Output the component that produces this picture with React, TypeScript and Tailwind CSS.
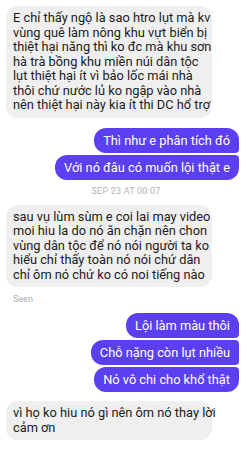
const font = { fontFamily: "Roboto, 'Noto Sans', sans-serif" };

type Pos = "first" | "middle" | "last" | "single";

function Received({ lines }: { lines: string[] }) {
  return (
    <div className="flex justify-start pl-[6px]">
      <div className="w-[206px] rounded-[12px] bg-[#efefef] px-[7px] py-[5px] text-[12.8px] leading-[14.5px] text-[#1c1c1c]">
        {lines.map((l, i) => (
          <div key={i} className="whitespace-nowrap">
            {l}
          </div>
        ))}
      </div>
    </div>
  );
}

function Sent({ text, pos }: { text: string; pos: Pos }) {
  const corners =
    pos === "first"
      ? "rounded-[12px] rounded-br-[4px]"
      : pos === "middle"
        ? "rounded-[12px] rounded-tr-[4px] rounded-br-[4px]"
        : pos === "last"
          ? "rounded-[12px] rounded-tr-[4px]"
          : "rounded-[12px]";
  return (
    <div className="flex justify-end pr-[11px]">
      <div
        className={`${corners} bg-[#5b40f2] px-[9px] py-[5px] text-[12.8px] leading-[15px] text-white whitespace-nowrap`}
      >
        {text}
      </div>
    </div>
  );
}

export default function App() {
  return (
    <div className="w-[250px] h-[449px] overflow-hidden bg-white" style={font}>
      <div className="pt-[6px]">
        <Received
          lines={[
            "E chỉ thấy ngộ là sao htro lụt mà kv",
            "vùng quê làm nông khu vựt biển bị",
            "thiệt hại năng thì ko đc mà khu sơn",
            "hà trà bồng khu miền núi dân tộc",
            "lụt thiệt hại ít vì bảo lốc mái nhà",
            "thôi chứ nước lủ ko ngập vào nhà",
            "nên thiệt hại này kia ít thi DC hổ trợ",
          ]}
        />
      </div>

      <div className="mt-[10px] flex flex-col gap-[2px]">
        <Sent text="Thì như e phân tích đó" pos="first" />
        <Sent text="Với nó đâu có muốn lội thật e" pos="last" />
      </div>

      <div className="flex h-[25px] items-center justify-center pl-[2px] text-[9px] tracking-[0.2px] text-[#b3b3b3]">
        SEP 23 AT 00:07
      </div>

      <Received
        lines={[
          "sau vụ lùm sùm e coi lai may video",
          "moi hiu la do nó ăn chặn nên chon",
          "vùng dân tộc để nó nói người ta ko",
          "hiểu chỉ thấy toàn nó nói chứ dân",
          "chỉ ôm nó chứ ko có noi tiếng nào",
        ]}
      />

      <div className="pl-[13px] pt-[7px] text-[9px] leading-[11px] text-[#a9a9a9]">Seen</div>

      <div className="mt-[8px] flex flex-col gap-[2px]">
        <Sent text="Lội làm màu thôi" pos="first" />
        <Sent text="Chỗ nặng còn lụt nhiều" pos="middle" />
        <Sent text="Nó vô chi cho khổ thật" pos="last" />
      </div>

      <div className="mt-[9px]">
        <Received lines={["vì họ ko hiu nó gì nên ôm nó thay lời", "cảm ơn"]} />
      </div>
    </div>
  );
}
